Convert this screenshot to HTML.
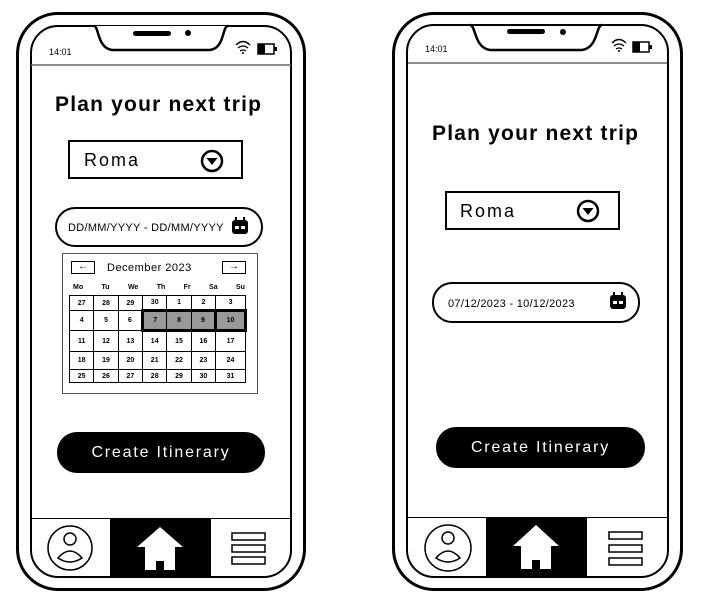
<!DOCTYPE html>
<html><head><meta charset="utf-8"><style>
*{margin:0;padding:0;box-sizing:border-box}
body{width:704px;height:608px;background:#fff;position:relative;overflow:hidden;font-family:"Liberation Sans",sans-serif;color:#000}
.a{position:absolute}
.outer{border:3px solid #000;border-radius:42px}
.inner{border:2px solid #000;border-radius:28px;overflow:hidden;background:#fff}
.title{font-size:21px;letter-spacing:1.2px;font-weight:bold;white-space:nowrap}
.box{border:2px solid #000;font-size:18px;letter-spacing:2px}
.pill{border:2px solid #000;border-radius:20px;font-size:11px}
.btn{background:#000;color:#fff;border-radius:20px;font-size:16px;text-align:center;letter-spacing:1.8px}
table{border-collapse:collapse}
td{border:1px solid #000;font-size:7px;font-weight:bold;text-align:center;padding:0}
</style></head><body>

<div class="a outer" style="left:16px;top:12px;width:290px;height:579px"></div>
<div class="a inner" style="left:30px;top:25px;width:262px;height:553px"></div>
<svg class="a" style="left:0;top:0" width="704" height="608">
 <path d="M94,26 C99,26 97,48 112,50 L210,50 C225,48 222,26 228,26" fill="#fff" stroke="#000" stroke-width="2.5"/>
 <rect x="133" y="31" width="38" height="5" rx="2.5"/><circle cx="188" cy="33" r="3"/>
 <line x1="31" y1="65" x2="291" y2="65" stroke="#666" stroke-width="1.5"/>
 <text x="49" y="55" font-size="9" font-family="Liberation Sans">14:01</text>
 <path d="M236,45 q7,-7 14,0 M238,48 q5,-4 10,0 M240,51 q3,-2 6,0" fill="none" stroke="#000" stroke-width="1.3"/><circle cx="243" cy="53" r="1"/>
 <rect x="258" y="44" width="16" height="10" fill="#fff" stroke="#000" stroke-width="1.5"/><rect x="258" y="44" width="7" height="10"/><rect x="274" y="47" width="3" height="4" fill="#000"/>
 <path d="M470,25 C476,25 474,48 490,50 L582,50 C598,48 596,25 602,25" fill="#fff" stroke="#000" stroke-width="2.5"/>
 <rect x="507" y="29" width="38" height="5" rx="2.5"/><circle cx="563" cy="32" r="3"/>
 <line x1="408" y1="63" x2="667" y2="63" stroke="#666" stroke-width="1.5"/>
 <text x="425" y="52" font-size="9" font-family="Liberation Sans">14:01</text>
 <path d="M612,43 q7,-7 14,0 M614,46 q5,-4 10,0 M616,49 q3,-2 6,0" fill="none" stroke="#000" stroke-width="1.3"/><circle cx="619" cy="51" r="1"/>
 <rect x="633" y="42" width="16" height="10" fill="#fff" stroke="#000" stroke-width="1.5"/><rect x="633" y="42" width="7" height="10"/><rect x="649" y="45" width="3" height="4" fill="#000"/>
</svg>

<div class="a title" style="left:55px;top:93px">Plan your next trip</div>
<div class="a box" style="left:68px;top:140px;width:175px;height:39px;padding:8px 0 0 14px">Roma</div>
<svg class="a" style="left:200px;top:149px" width="24" height="24"><circle cx="12" cy="12" r="10" fill="none" stroke="#000" stroke-width="2.5"/><path d="M6.5,9 L17.5,9 L12,16z"/></svg>
<div class="a pill" style="left:55px;top:207px;width:208px;height:40px;padding:13px 0 0 11px;letter-spacing:.3px">DD/MM/YYYY - DD/MM/YYYY</div>
<svg class="a" style="left:231px;top:217px" width="18" height="18"><rect x="1" y="3" width="16" height="14" rx="3"/><rect x="4" y="0" width="2" height="4"/><rect x="12" y="0" width="2" height="4"/><rect x="4" y="9" width="4" height="3" fill="#fff"/><rect x="10" y="9" width="4" height="3" fill="#fff"/></svg>

<div class="a" style="left:62px;top:253px;width:196px;height:141px;border:1.5px solid #555"></div>
<div class="a" style="left:71px;top:261px;width:24px;height:13px;border:1.5px solid #000;font-size:10px;text-align:center;line-height:10px">←</div>
<div class="a" style="left:222px;top:261px;width:24px;height:13px;border:1.5px solid #000;font-size:10px;text-align:center;line-height:10px">→</div>
<div class="a" style="left:107px;top:262px;font-size:11px;letter-spacing:.5px">December 2023</div>
<div class="a" style="left:70px;top:284px;width:178px;font-size:7px;font-weight:bold;display:flex;justify-content:space-between;padding:0 3px"><span>Mo</span><span>Tu</span><span>We</span><span>Th</span><span>Fr</span><span>Sa</span><span>Su</span></div>
<table class="a" style="left:69px;top:295px;width:178px">
<tr style="height:15px"><td>27</td><td>28</td><td>29</td><td>30</td><td>1</td><td>2</td><td>3</td></tr>
<tr style="height:20px"><td>4</td><td>5</td><td>6</td><td style="background:#999;border-top:3px solid #000;border-bottom:3px solid #000;border-left:3px solid #000">7</td><td style="background:#999;border-top:3px solid #000;border-bottom:3px solid #000">8</td><td style="background:#999;border-top:3px solid #000;border-bottom:3px solid #000">9</td><td style="background:#999;border:3px solid #000">10</td></tr>
<tr style="height:21px"><td>11</td><td>12</td><td>13</td><td>14</td><td>15</td><td>16</td><td>17</td></tr>
<tr style="height:18px"><td>18</td><td>19</td><td>20</td><td>21</td><td>22</td><td>23</td><td>24</td></tr>
<tr style="height:13px"><td>25</td><td>26</td><td>27</td><td>28</td><td>29</td><td>30</td><td>31</td></tr>
</table>

<div class="a btn" style="left:57px;top:432px;width:208px;height:41px;line-height:41px">Create Itinerary</div>

<div class="a" style="left:31px;top:518px;width:260px;border-top:1.5px solid #000"></div>
<div class="a" style="left:110px;top:518px;width:101px;height:58px;background:#000"></div>

<div class="a outer" style="left:392px;top:12px;width:291px;height:579px"></div>
<div class="a inner" style="left:406px;top:24px;width:263px;height:554px;background:transparent"></div>
<div class="a title" style="left:432px;top:122px">Plan your next trip</div>
<div class="a box" style="left:445px;top:191px;width:175px;height:39px;padding:8px 0 0 13px">Roma</div>
<svg class="a" style="left:576px;top:199px" width="24" height="24"><circle cx="12" cy="12" r="10" fill="none" stroke="#000" stroke-width="2.5"/><path d="M6.5,9 L17.5,9 L12,16z"/></svg>
<div class="a pill" style="left:432px;top:282px;width:208px;height:41px;padding:14px 0 0 14px;letter-spacing:.3px">07/12/2023 - 10/12/2023</div>
<svg class="a" style="left:609px;top:292px" width="18" height="18"><rect x="1" y="3" width="16" height="14" rx="3"/><rect x="4" y="0" width="2" height="4"/><rect x="12" y="0" width="2" height="4"/><rect x="4" y="9" width="4" height="3" fill="#fff"/><rect x="10" y="9" width="4" height="3" fill="#fff"/></svg>
<div class="a btn" style="left:436px;top:427px;width:209px;height:41px;line-height:41px">Create Itinerary</div>
<div class="a" style="left:407px;top:517px;width:261px;border-top:1.5px solid #000"></div>
<div class="a" style="left:486px;top:517px;width:101px;height:59px;background:#000"></div>

<svg class="a" style="left:0;top:0" width="704" height="608">
 <g fill="none" stroke="#000" stroke-width="1.5">
  <circle cx="70" cy="548" r="22"/><circle cx="70" cy="539" r="6"/><path d="M58,558 q12,-14 24,0 q-12,8 -24,0z"/>
  <rect x="232" y="533" width="33" height="7"/><rect x="232" y="545" width="33" height="7"/><rect x="232" y="557" width="33" height="7"/>
  <circle cx="448" cy="548" r="23"/><circle cx="448" cy="538" r="6"/><path d="M436,558 q12,-14 24,0 q-12,8 -24,0z"/>
  <rect x="609" y="532" width="33" height="7"/><rect x="609" y="545" width="33" height="7"/><rect x="609" y="558" width="33" height="7"/>
 </g>
 <path d="M137,547 L160,527 L183,547 L175,547 L175,570 L164,570 L164,561 L156,561 L156,570 L145,570 L145,547z" fill="#fff"/>
 <path d="M513,546 L536,525 L559,546 L551,546 L551,569 L540,569 L540,560 L532,560 L532,569 L521,569 L521,546z" fill="#fff"/>
</svg>
</body></html>
